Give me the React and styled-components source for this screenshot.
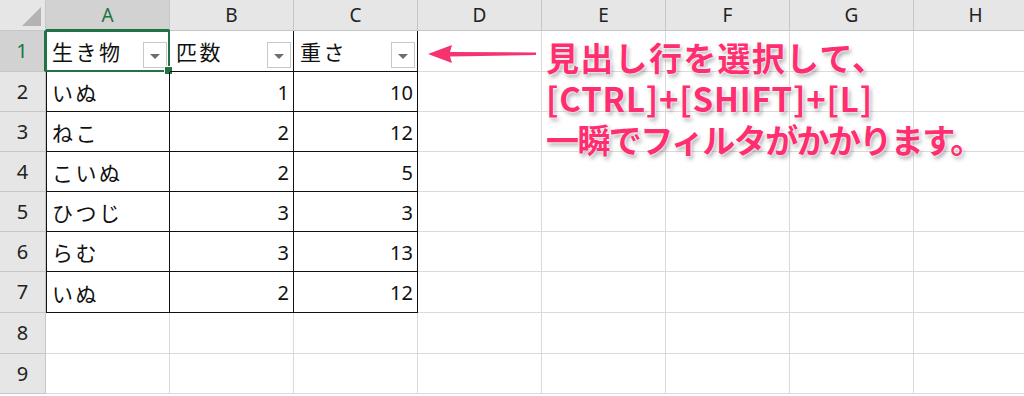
import React from "react";
import styled, { createGlobalStyle, css } from "styled-components";

const Global = createGlobalStyle`
  html, body { margin: 0; padding: 0; background: #fff; overflow: hidden; }
  body { width: 1024px; height: 396px; font-family: "Noto Sans CJK JP", "Noto Sans", sans-serif; }
`;

const COLS = ["A", "B", "C", "D", "E", "F", "G", "H"];
const ROW_H = [41, 40, 40, 40, 40, 40, 41, 41, 40];
const DATA = [
  ["生き物", "匹数", "重さ"],
  ["いぬ", 1, 10],
  ["ねこ", 2, 12],
  ["こいぬ", 2, 5],
  ["ひつじ", 3, 3],
  ["らむ", 3, 13],
  ["いぬ", 2, 12],
];

const Sheet = styled.div`
  position: relative;
  width: 1024px;
  height: 396px;
  overflow: hidden;
`;

const Grid = styled.div`
  display: grid;
  grid-template-columns: 46px repeat(8, 124px);
  grid-template-rows: 31px ${ROW_H.map((h) => h + "px").join(" ")};
`;

const Corner = styled.div`
  box-sizing: border-box;
  background: #e6e6e6;
  border-right: 1px solid #c6c6c6;
  border-bottom: 1px solid #c6c6c6;
  display: flex;
  justify-content: flex-end;
  align-items: flex-end;
  padding: 0 4px 4px 0;
  &::after {
    content: "";
    width: 0;
    height: 0;
    border-left: 19px solid transparent;
    border-bottom: 19px solid #b3b3b3;
  }
`;

const ColHead = styled.div`
  box-sizing: border-box;
  background: ${(p) => (p.$active ? "#d2d2d2" : "#e6e6e6")};
  color: ${(p) => (p.$active ? "#217346" : "#222")};
  border-right: 1px solid #c6c6c6;
  border-bottom: ${(p) => (p.$active ? "2px solid #217346" : "1px solid #c6c6c6")};
  display: flex;
  align-items: center;
  justify-content: center;
  font-family: "Noto Sans", sans-serif;
  font-size: 19px;
  line-height: 1;
  padding-top: 1px;
`;

const RowHead = styled.div`
  box-sizing: border-box;
  background: ${(p) => (p.$active ? "#d2d2d2" : "#e6e6e6")};
  color: ${(p) => (p.$active ? "#217346" : "#222")};
  border-right: ${(p) => (p.$active ? "2px solid #217346" : "1px solid #c6c6c6")};
  border-bottom: 1px solid #c6c6c6;
  display: flex;
  align-items: center;
  justify-content: center;
  font-family: "Noto Sans", sans-serif;
  font-size: 20px;
  line-height: 1;
`;

const Cell = styled.div`
  position: relative;
  box-sizing: border-box;
  border-right: 1px solid #dadada;
  border-bottom: 1px solid #dadada;
  display: flex;
  align-items: center;
  padding: ${(p) => (p.$header ? "0 2px 3px 6px" : "0 4px 0 6px")};
  font-size: ${(p) => (p.$num ? "20px" : "21px")};
  font-family: ${(p) =>
    p.$num ? `"Noto Sans", sans-serif` : `"Noto Sans CJK JP", sans-serif`};
  letter-spacing: ${(p) => (p.$num ? "0" : "2.5px")};
  color: #111;
  line-height: 1;
  ${(p) =>
    p.$table &&
    css`
      border-right: 1px solid #111;
      border-bottom: 1px solid #111;
    `}
  ${(p) =>
    p.$tableLeft &&
    css`
      box-shadow: inset 1px 0 0 #111;
    `}
`;

const CellText = styled.span`
  flex: 1;
  text-align: ${(p) => (p.$num ? "right" : "left")};
  padding-top: ${(p) => (p.$header ? "4px" : "2px")};
`;

const FilterButton = styled.span`
  align-self: flex-end;
  flex: none;
  width: 24px;
  height: 26px;
  box-sizing: border-box;
  border: 1px solid #c8c8c8;
  background: #fff;
  display: flex;
  align-items: center;
  justify-content: center;
  &::after {
    content: "";
    width: 0;
    height: 0;
    border-left: 5px solid transparent;
    border-right: 5px solid transparent;
    border-top: 5px solid #6e6e6e;
    margin-top: 2px;
  }
`;

const Selection = styled.span`
  position: absolute;
  inset: -1px;
  border: 2px solid #217346;
  pointer-events: none;
  &::after {
    content: "";
    position: absolute;
    right: -5px;
    bottom: -5px;
    width: 7px;
    height: 7px;
    background: #217346;
    border: 1px solid #fff;
  }
`;

const Annotation = styled.div`
  position: absolute;
  left: 424px;
  top: 37px;
  display: flex;
  align-items: flex-start;
  gap: 8px;
`;

const Arrow = styled.svg`
  flex: none;
  margin-top: 5px;
`;

const Note = styled.div`
  color: #ff2e70;
  font-family: "Noto Sans CJK JP", sans-serif;
  font-weight: 700;
  font-size: 33px;
  line-height: 41px;
  white-space: nowrap;
  text-shadow: 0 0 2px #fff, 0 0 3px #fff, 2px 3px 4px rgba(0, 0, 0, 0.35);
`;

const NoteLine = styled.div`
  letter-spacing: ${(p) => p.$spacing || "0"};
`;

export default function App() {
  const rows = [];
  ROW_H.forEach((_, r) => {
    const rowNo = r + 1;
    rows.push(
      <RowHead key={"rh" + r} $active={r === 0}>
        {rowNo}
      </RowHead>
    );
    COLS.forEach((c, ci) => {
      const data = DATA[r];
      const inTable = data && ci < 3;
      const value = inTable ? data[ci] : null;
      const isNum = typeof value === "number";
      const isHeader = r === 0 && inTable;
      rows.push(
        <Cell
          key={c + rowNo}
          $num={isNum}
          $header={isHeader}
          $table={inTable}
          $tableLeft={inTable && ci === 0}
        >
          {value !== null && (
            <CellText $num={isNum} $header={isHeader}>
              {value}
            </CellText>
          )}
          {isHeader && <FilterButton />}
          {r === 0 && ci === 0 && <Selection />}
        </Cell>
      );
    });
  });

  return (
    <>
      <Global />
      <Sheet>
        <Grid>
          <Corner />
          {COLS.map((c) => (
            <ColHead key={c} $active={c === "A"}>
              {c}
            </ColHead>
          ))}
          {rows}
        </Grid>
        <Annotation>
          <Arrow width="114" height="24" viewBox="0 0 114 24">
            <path d="M4 12 L28 3 L26 10 L112 10.5 L112 13 L26 14.5 L28 21 Z" fill="#f6326f" />
          </Arrow>
          <Note>
            <NoteLine $spacing="1.3px">見出し行を選択して、</NoteLine>
            <NoteLine $spacing="0.8px">[CTRL]+[SHIFT]+[L]</NoteLine>
            <NoteLine $spacing="-1.6px">一瞬でフィルタがかかります。</NoteLine>
          </Note>
        </Annotation>
      </Sheet>
    </>
  );
}
